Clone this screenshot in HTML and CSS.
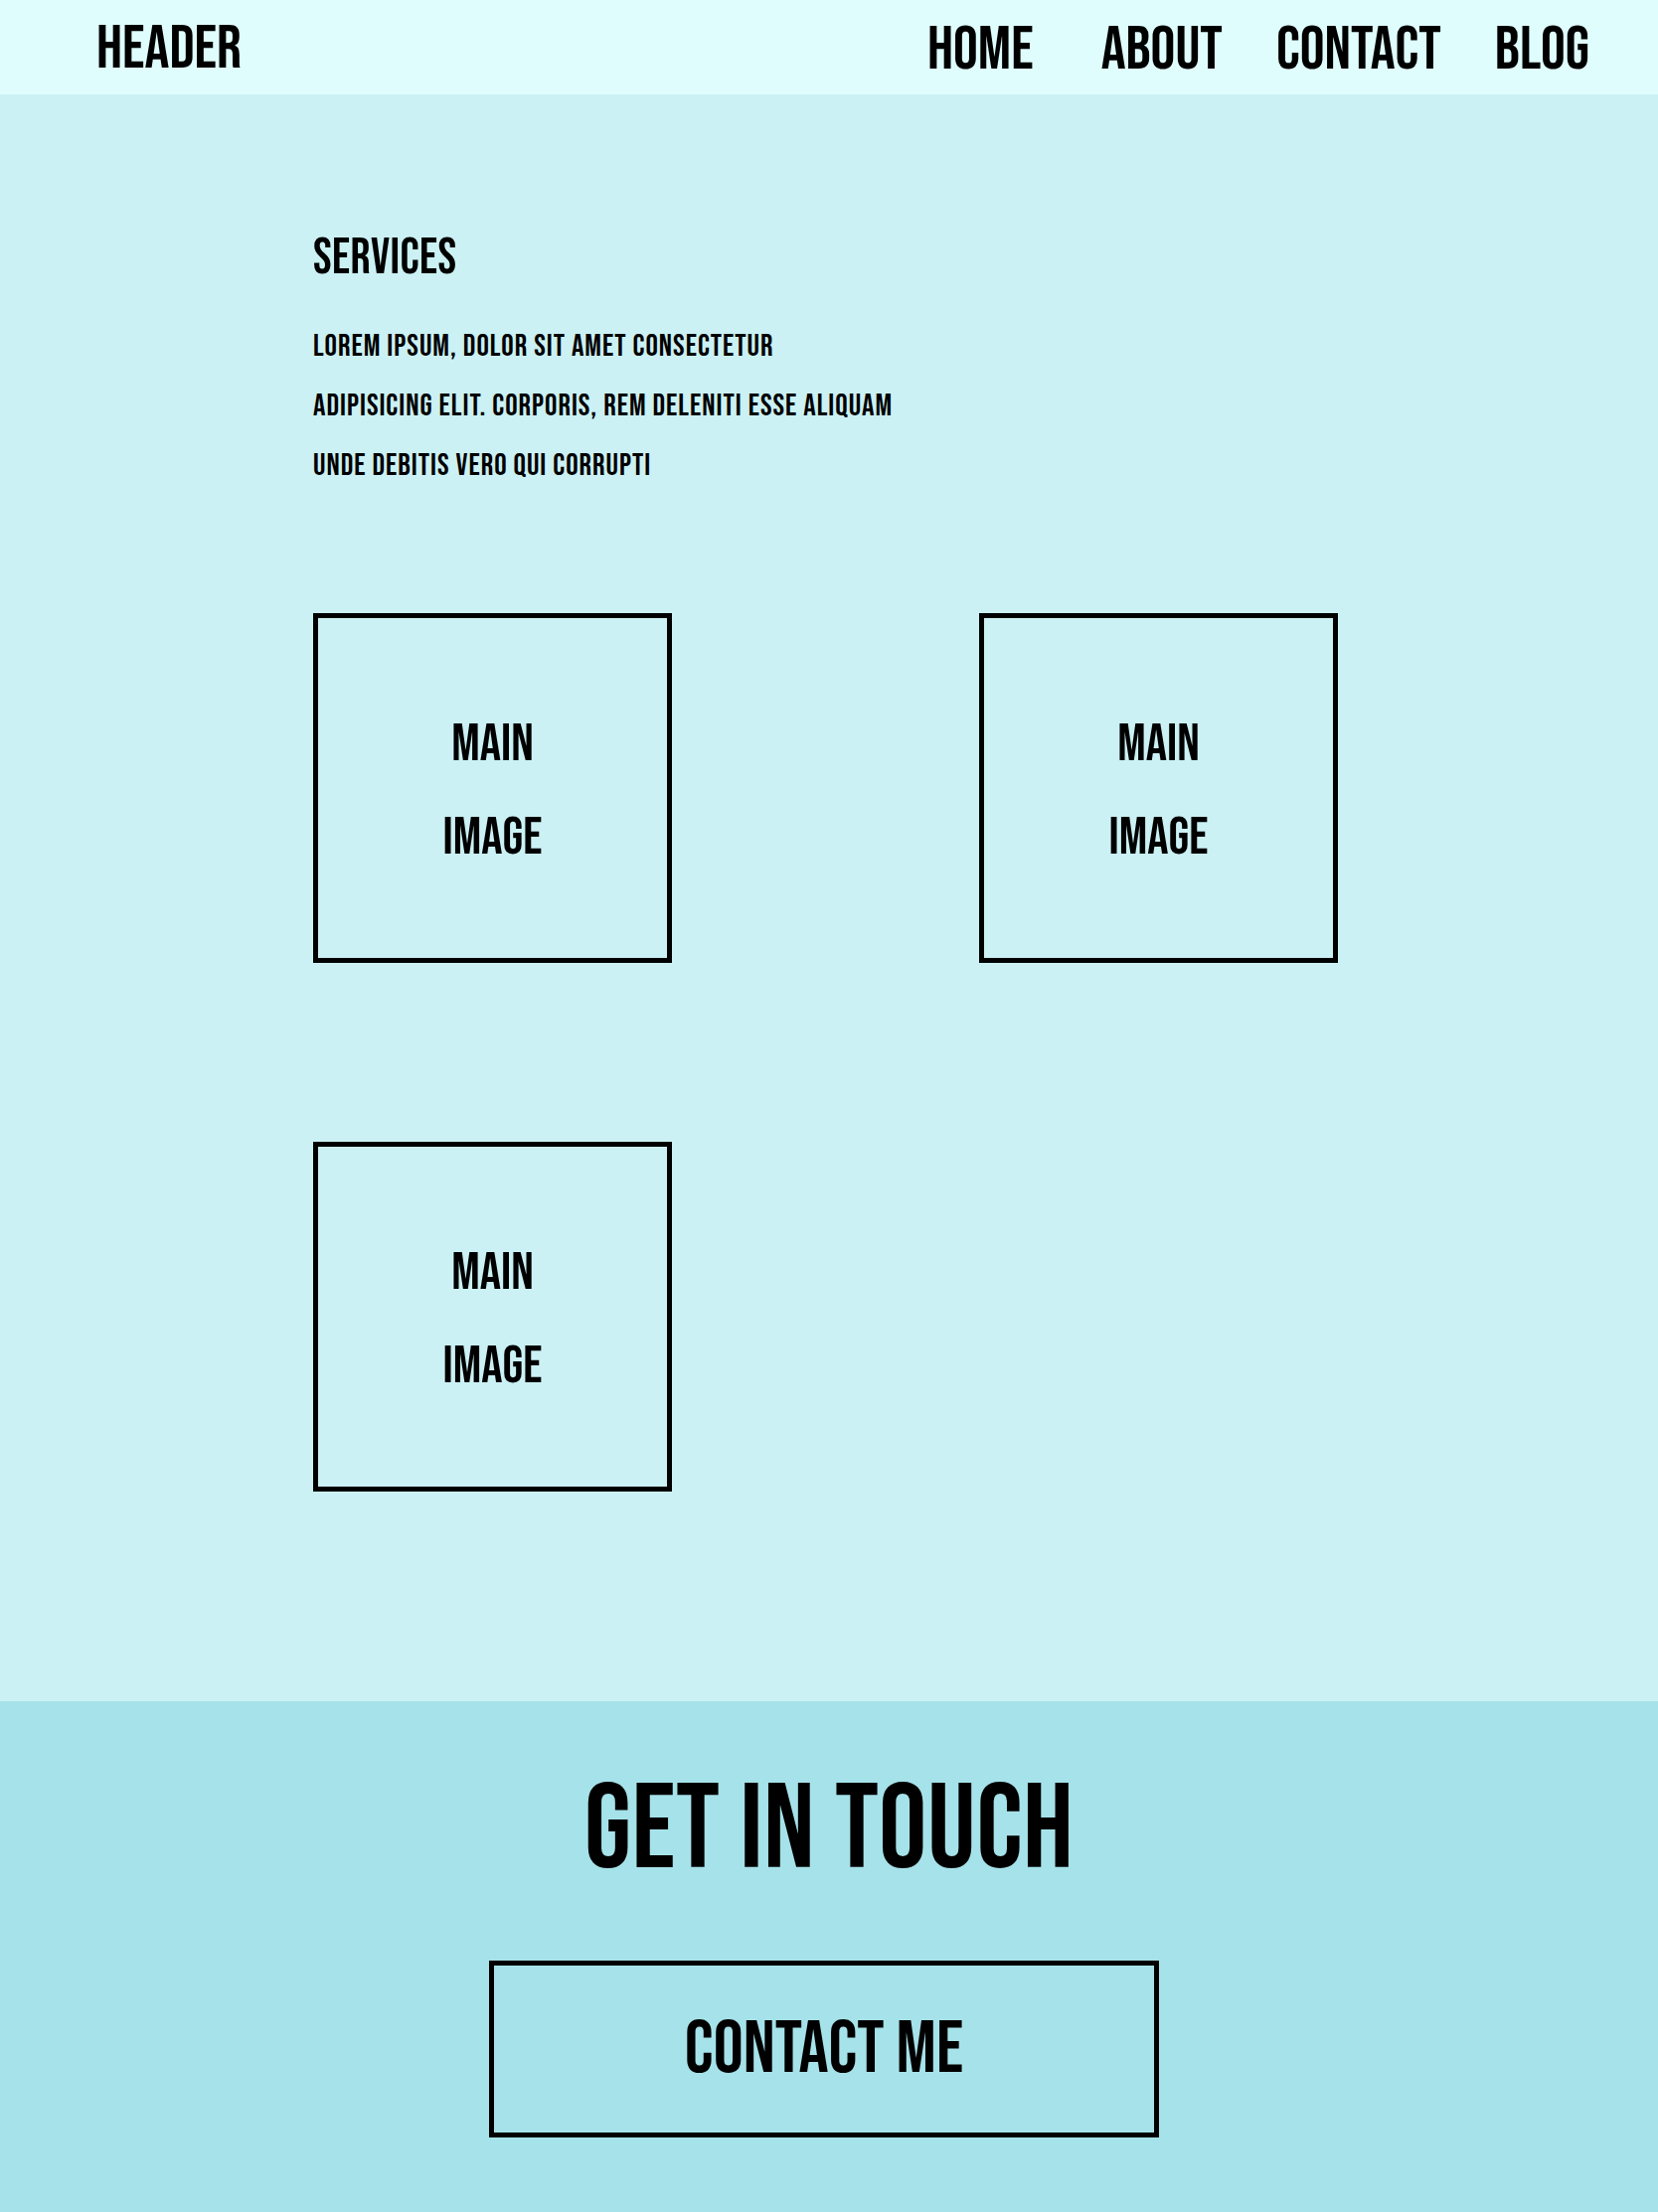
FILE: index.html
```html
<!DOCTYPE html>
<html lang="en">
<head>
<meta charset="utf-8">
<title>Services</title>
<link rel="stylesheet" href="styles.css">
</head>
<body>
<header class="site-header">
  <div class="logo">Header</div>
  <nav class="nav">
    <a class="nav-link nav-home" href="#">Home</a>
    <a class="nav-link" href="#">About</a>
    <a class="nav-link" href="#">Contact</a>
    <a class="nav-link" href="#">Blog</a>
  </nav>
</header>
<main class="services">
  <h2 class="services-title">Services</h2>
  <p class="services-text">Lorem ipsum, dolor sit amet consectetur<br>adipisicing elit. Corporis, rem deleniti esse aliquam<br>unde debitis vero qui corrupti</p>
  <div class="gallery">
    <div class="image-box"><span>Main</span><span>Image</span></div>
    <div class="image-box"><span>Main</span><span>Image</span></div>
    <div class="image-box"><span>Main</span><span>Image</span></div>
  </div>
</main>
<footer class="contact">
  <h2 class="contact-title">Get in touch</h2>
  <a class="contact-btn" href="#">Contact me</a>
</footer>
</body>
</html>
```
FILE: styles.css
```css
* { box-sizing: border-box; }
body {
  margin: 0;
  font-family: "Bebas Neue", "Liberation Sans Narrow", "Liberation Sans", sans-serif;
  color: #000;
  text-transform: uppercase;
}
a { color: #000; text-decoration: none; }
h2, p { margin: 0; font-weight: 400; }

.site-header {
  height: 95px;
  background: #e0fdfd;
  display: flex;
  align-items: center;
  justify-content: space-between;
  padding: 4px 69px 0 97px;
}
.logo { font-size: 62px; line-height: 1; }
.nav { display: flex; gap: 54px; padding-top: 3px; }
.nav-link { font-size: 62px; line-height: 1; }
.nav-home { margin-right: 14px; }

.services {
  background: #cbf1f4;
  padding: 140px 0 211px 315px;
}
.services-title { font-size: 50px; line-height: 1; letter-spacing: 0.4px; }
.services-text {
  margin-top: 34px;
  font-size: 31px;
  line-height: 60px;
  letter-spacing: 1px;
}
.gallery {
  margin-top: 118px;
  display: grid;
  grid-template-columns: 361px 361px;
  grid-auto-rows: 352px;
  column-gap: 309px;
  row-gap: 180px;
}
.image-box {
  border: 5px solid #000;
  display: flex;
  flex-direction: column;
  align-items: center;
  justify-content: center;
  padding-top: 6px;
  font-size: 53px;
  line-height: 94px;
}

.contact {
  background: #a6e2e9;
  height: 514px;
  padding-top: 70px;
  display: flex;
  flex-direction: column;
  align-items: center;
}
.contact-title { font-size: 121px; line-height: 1; letter-spacing: 0.5px; }
.contact-btn {
  margin-top: 70px;
  margin-right: 10px;
  width: 674px;
  height: 178px;
  border: 5px solid #000;
  display: flex;
  align-items: center;
  justify-content: center;
  font-size: 75px;
  line-height: 1;
}
```
